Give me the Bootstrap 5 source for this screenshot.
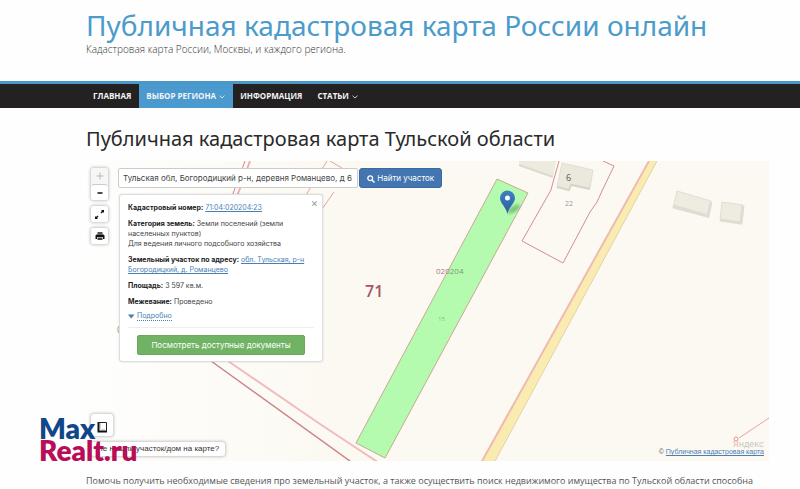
<!DOCTYPE html>
<html lang="ru">
<head>
<meta charset="utf-8">
<meta name="viewport" content="width=device-width, initial-scale=1">
<title>Публичная кадастровая карта Тульской области</title>
<link rel="stylesheet" href="https://cdn.jsdelivr.net/npm/bootstrap@5.3.0/dist/css/bootstrap.min.css">
<style>
  body { font-family: "Open Sans", sans-serif; background: #fefefe; color: #444; overflow-x: hidden; }
  .page-pad { padding-left: 86px; padding-right: 31px; }
  .site-head { padding-top: 8px; padding-bottom: 25px; }
  .site-title { font-family: "Noto Sans", "Open Sans", sans-serif; font-size: 28px; line-height: 34px; }
  .site-title a { color: #4b9bcb; }
  .site-sub { font-size: 10px; line-height: 14px; font-weight: 300; color: #333; }
  .main-nav { background: #232122; border-top: 3px solid #4a97ca; }
  .main-nav .nav-link { font-size: 8px; line-height: 24px; font-weight: 700; color: #f4f4f4; padding: 0 8px 0 7px; }
  .main-nav .nav-link svg { margin-left: 1px; }
  .main-nav .nav-link.active { background: #4a9ad0; color: #f4f4f4; }
  .page-title { font-family: "Noto Sans", "Open Sans", sans-serif; font-size: 20px; line-height: 28px; font-weight: 400; color: #2a2a2a; margin: 17px 0 8px; }
  .map { min-height: 300px; font-family: Inter, "Liberation Sans", sans-serif; background: #fcf9f2; }
  .map-art { z-index: 0; }
  .map-ui { z-index: 1; min-height: 300px; padding: 7px 5px 5px 5px; }
  .tool-stack { row-gap: 6px; margin-right: 10px; }
  .tool-btn { display: block; width: 17px; height: 16px; background: #fff; border: 0; padding: 0; line-height: 0; color: #111; }
  .tool-box { border-radius: 3px; background: #fff; box-shadow: 0 0 3px 1px rgba(0,0,0,.22); }
  .tool-box .tool-btn { border-radius: 3px; }
  .tool-btn + .tool-btn { border-top: 1px solid #ccc; }
  .tool-btn.dim { color: #bbb; background: #f6f6f6; }
  .search-row { column-gap: 1px; margin-bottom: 6px; }
  .search-box { width: 240px; height: 20px; font-size: 8px; padding: 0 4px; border: 1px solid #ccc; border-radius: 2px; color: #444; background: #fff; }
  .search-btn { height: 20px; font-size: 8px; line-height: 18px; padding: 0 7px; border-radius: 3px; background: #4375b0; border: 1px solid #3a6aa3; color: #fff; }
  .info-card { width: 204px; margin-left: 1px; padding: 8px 8px 6px; border: 1px solid #ddd; border-radius: 3px; font-size: 7px; line-height: 10px; color: #444; box-shadow: 0 0 2px rgba(0,0,0,.15); }
  .info-card p { margin-bottom: 6px; }
  .info-card b { color: #222; }
  .info-card a { color: #4a7fb5; }
  .info-card .close-x { top: 3px; right: 4px; border: 0; background: none; padding: 0; font-size: 11px; line-height: 10px; color: #999; }
  .info-card .more-link { font-size: 7px; text-decoration: none; border-bottom: 1px dotted #4a7fb5; }
  .doc-wrap { border-top: 1px solid #eee; padding-top: 7px; }
  .doc-btn { font-size: 8px; line-height: 18px; padding: 0; margin: 0 9px; border-radius: 2px; background: #70b364; border: 1px solid #68a95c; color: #fff; }
  .corner-btn { width: 22px; height: 22px; margin-bottom: 6px; background: #fff; }
  .missing-btn { border: 0; font-family: "Liberation Sans", sans-serif; font-size: 8px; line-height: 14px; padding: 0 6px; color: #333; background: #fff; }
  .credit { font-family: "Liberation Sans", sans-serif; font-size: 7px; line-height: 8px; color: #555; }
  .credit a { color: #4a7fb5; }
  .intro { font-size: 9px; line-height: 16px; margin-top: 12px; white-space: nowrap; color: #555; }
  .stamp { left: 39px; top: 417px; z-index: 5; font-family: Lato, sans-serif; font-weight: 800; font-size: 28px; line-height: 22px; color: #b80d57; }
  .stamp span { color: #0f4788; }
</style>
<script src="https://cdn.jsdelivr.net/npm/bootstrap@5.3.0/dist/js/bootstrap.bundle.min.js"></script>
</head>
<body class="position-relative">
<header class="site-head page-pad">
  <div class="site-title text-nowrap"><a class="text-decoration-none" href="#">Публичная кадастровая карта России онлайн</a></div>
  <div class="site-sub">Кадастровая карта России, Москвы, и каждого региона.</div>
</header>
<nav class="main-nav page-pad">
  <ul class="nav flex-nowrap">
    <li class="nav-item"><a class="nav-link" href="#">ГЛАВНАЯ</a></li>
    <li class="nav-item"><a class="nav-link active" href="#">ВЫБОР РЕГИОНА <svg width="6" height="4" viewBox="0 0 6 4"><path d="M.5.7 3 3 5.500.7" fill="none" stroke="currentColor" stroke-width=".8"/></svg></a></li>
    <li class="nav-item"><a class="nav-link" href="#">ИНФОРМАЦИЯ</a></li>
    <li class="nav-item"><a class="nav-link" href="#">СТАТЬИ <svg width="6" height="4" viewBox="0 0 6 4"><path d="M.5.7 3 3 5.500.7" fill="none" stroke="currentColor" stroke-width=".8"/></svg></a></li>
  </ul>
</nav>
<main class="page-pad">
  <h1 class="page-title">Публичная кадастровая карта Тульской области</h1>
  <section class="map position-relative overflow-hidden">
    <svg class="map-art position-absolute top-0 start-0 w-100 h-100" viewBox="86 161 683 300" preserveAspectRatio="xMinYMin slice" aria-hidden="true">
      <defs>
        <linearGradient id="fade"><stop offset="0" stop-color="#fefefd"/><stop offset="1" stop-color="#fcf9f2"/></linearGradient>
        <linearGradient id="pin" x2="0" y2="1"><stop offset="0" stop-color="#3f80c4"/><stop offset="1" stop-color="#2b5f9d"/></linearGradient>
        <filter id="soft"><feGaussianBlur stdDeviation="1.500"/></filter>
      </defs>
      <rect x="86" y="161" width="250" height="300" fill="url(#fade)"/>
      <g fill="none" stroke-width="1">
        <path d="M245 161 230 202" stroke="#c98a8a"/><path d="M250 161 235 202" stroke="#eeb0b0" stroke-width="2"/>
        <path d="M330 161 342 168M334 192 322 209" stroke="#e0a5a0"/><path d="M327 161 306 195" stroke="#e0a5a0"/>
        <path d="M211 361 350 461" stroke="#c98484" stroke-width="1.500"/>
        <path d="M228 361 320 424 379 463" stroke="#f0bcbc" stroke-width="2"/>
      </g>
      <g stroke="#d9d4c9" stroke-width="1">
        <path d="M519 161h37l-3 16-34-11z" fill="#edeae0" stroke="none"/>
        <path d="M519 165 553 177" stroke="#dedace" stroke-width="2"/>
        <path d="M562 163 593 170 590 188 571 184 569 190 557 187z" fill="#ebe8dd" stroke="#e2ded3"/>
        <path d="M557 187 569 190 571 185 590 189" fill="none" stroke="#d8d4c9" stroke-width="2"/>
        <path d="M677 191 711 201 708 217 673 208z" fill="#eeebe1" stroke="#e2ded3"/>
        <path d="M673 206 708 216 711 202" fill="none" stroke="#e0dcd1" stroke-width="3"/>
        <path d="M722 202 743 205 741 223 720 220z" fill="#eeebe1" stroke="#e2ded3"/>
        <path d="M720 220 741 223 743 206" fill="none" stroke="#e0dcd1" stroke-width="3"/>
      </g>
      <path d="M650 161h7L494 463h-13z" fill="#faecb0"/>
      <path d="M657 161 494 463" stroke="#dfd3ab"/>
      <path d="M649 161 481 463" stroke="#efbbae" stroke-width="2"/>
      <path d="M559 161 552 186 551 190 522 241 563 263 590 212 597 202 602 191 614 166 603 161" fill="none" stroke="#d48e8e"/>
      <path d="M497 179 528 193 385 458 356 443z" fill="#b5fbaf" stroke="#c6a993"/>
      <path d="M769 418 739 438" stroke="#e5a29c"/>
      <circle cx="736" cy="439" r="2" fill="none" stroke="#dc9a98"/>
      <ellipse cx="514" cy="209" rx="7" ry="3" fill="#286d35" opacity=".4" filter="url(#soft)" transform="rotate(-35 514 209)"/>
      <path d="M507.500 214C506 207 500 203 500 198a7.500 7.500 0 0 1 15 0c0 5-6 9-7.500 16z" fill="url(#pin)"/>
      <circle cx="507.500" cy="198" r="2.500" fill="#fff"/>
      <g font-family="Open Sans, sans-serif">
        <text x="365" y="297" font-size="16" font-weight="600" fill="#a85566">71</text>
        <text x="436" y="274" font-size="8" fill="#a97883">020<tspan fill="#769c75">204</tspan></text>
        <text x="565" y="206" font-size="7" fill="#999">22</text>
        <text x="566" y="181" font-size="9" fill="#555">6</text>
        <text x="438" y="321" font-size="6" fill="#7fc17c">15</text>
        <text x="117" y="333" font-size="9" fill="#a88">0</text>
        <text x="733" y="447" font-family="Roboto, sans-serif" font-size="9" fill="#c9c7c3"><tspan fill="#ecb1ac">Я</tspan>ндекс</text>
      </g>
    </svg>
    <div class="map-ui position-relative d-flex flex-column justify-content-between">
      <div class="d-flex">
        <div class="tool-stack d-flex flex-column">
          <div class="tool-box">
            <button class="tool-btn dim" aria-label="Приблизить"><svg width="8" height="8" viewBox="0 0 8 8"><path d="M4 .5v7M.5 4h7" stroke="currentColor" stroke-width="1"/></svg></button>
            <button class="tool-btn" aria-label="Отдалить"><svg width="8" height="8" viewBox="0 0 8 8"><path d="M1.500 4h5" stroke="currentColor" stroke-width="1.500"/></svg></button>
          </div>
          <div class="tool-box"><button class="tool-btn" aria-label="Во весь экран"><svg width="11" height="11" viewBox="0 0 11 11"><path d="M1 10V7l1 1 1.500-1.500L4.500 7.500 3 9l1 1zM10 1v3L9 3 7.500 4.500 6.500 3.500 8 2 7 1z" fill="currentColor"/></svg></button></div>
          <div class="tool-box"><button class="tool-btn" aria-label="Печать"><svg width="10" height="10" viewBox="0 0 10 10"><path d="M2.500 1h5v2.500h-5z" fill="#555"/><path d="M1.500 3.500h7l1 1V8H8V6H2v2H.5V4.500z" fill="currentColor"/><path d="M2.500 6.500h5v2.500h-5z" fill="#444"/></svg></button></div>
        </div>
        <div class="flex-grow-1">
          <form class="search-row d-flex align-items-start" onsubmit="return false">
            <input class="search-box" type="text" aria-label="Адрес участка" value="Тульская обл, Богородицкий р-н, деревня Романцево, д 6">
            <button class="search-btn" type="submit"><svg width="8" height="8" viewBox="0 0 8 8"><circle cx="3.200" cy="3.200" r="2.400" fill="none" stroke="#fff" stroke-width="1.300"/><path d="M5 5 7.500 7.500" stroke="#fff" stroke-width="1.500"/></svg> Найти участок</button>
          </form>
          <div class="info-card bg-white position-relative">
            <button class="close-x position-absolute" type="button" aria-label="Закрыть">×</button>
            <p><b>Кадастровый номер:</b> <a href="#">71:04:020204:23</a></p>
            <p><b>Категория земель:</b> Земли поселений (земли<br>населенных пунктов)<br>Для ведения личного подсобного хозяйства</p>
            <p><b>Земельный участок по адресу:</b> <a href="#">обл. Тульская, р-н<br>Богородицкий, д. Романцево</a></p>
            <p><b>Площадь:</b> 3 597 кв.м.</p>
            <p class="mb-1"><b>Межевание:</b> Проведено</p>
            <p><svg width="7" height="5" viewBox="0 0 7 5"><path d="M0 .5h6.500L3.200 4.500z" fill="#4a7fa5"/></svg> <a class="more-link" href="#">Подробно</a></p>
            <div class="doc-wrap d-flex"><button class="doc-btn flex-grow-1" type="button">Посмотреть доступные документы</button></div>
          </div>
        </div>
      </div>
      <div class="d-flex justify-content-between align-items-end">
        <div class="d-flex flex-column align-items-start">
          <button class="corner-btn tool-box border-0 p-0 lh-1" aria-label="Линейка"><svg width="12" height="12" viewBox="0 0 12 12"><path d="M2.500 1v9.500H11" fill="none" stroke="#111" stroke-width="2"/><path d="M2.500 1.500h8v9" fill="none" stroke="#222"/><path d="M4 3h1M4 5h1M4 7h1M6 9V8M8 9V8" stroke="#777" stroke-width=".7"/></svg></button>
          <button class="missing-btn tool-box">Не нашли участок/дом на карте?</button>
        </div>
        <div class="credit">© <a href="#">Публичная кадастровая карта</a></div>
      </div>
    </div>
  </section>
  <p class="intro mb-0">Помочь получить необходимые сведения про земельный участок, а также осуществить поиск недвижимого имущества по Тульской области способна</p>
</main>
<div class="stamp position-absolute"><span>Max</span><br>Realt.ru</div>
</body>
</html>
